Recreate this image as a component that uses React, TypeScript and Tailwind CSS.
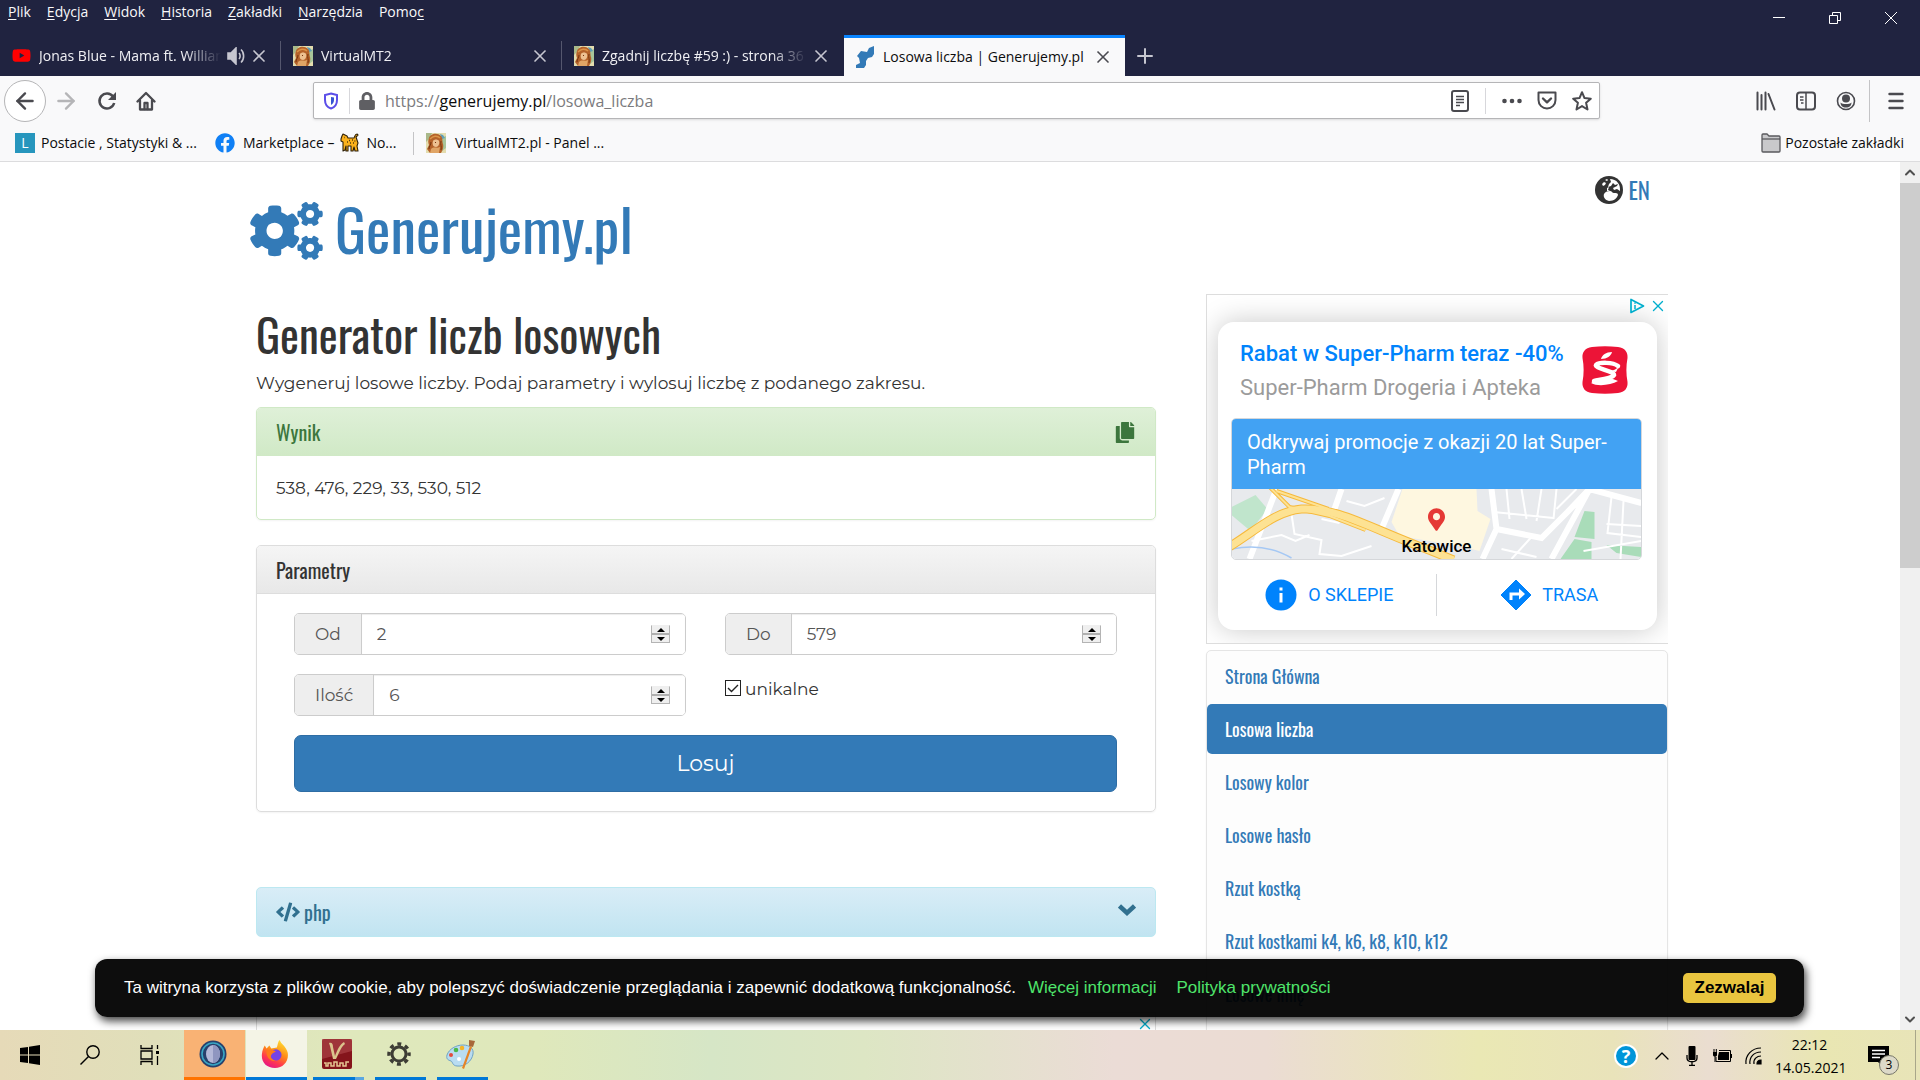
import React, { useState } from 'react';
import { FaCogs, FaCode, FaCopy, FaLock, FaFacebook, FaYoutube, FaMapMarkerAlt } from 'react-icons/fa';
import { ArrowLeft, ArrowRight, X, Plus, ChevronUp, ChevronDown } from 'lucide-react';

const MENU = ['Plik', 'Edycja', 'Widok', 'Historia', 'Zakładki', 'Narzędzia', 'Pomoc'];

const NAV_LINKS = [
  'Strona Główna',
  'Losowa liczba',
  'Losowy kolor',
  'Losowe hasło',
  'Rzut kostką',
  'Rzut kostkami k4, k6, k8, k10, k12',
  'Losowe imię',
];

const Portrait = () => (
  <svg viewBox="0 0 20 20" className="w-5 h-5 shrink-0">
    <rect width="20" height="20" fill="#e3dcae" />
    <path d="M0 0h6L3 6 0 9z" fill="#a9b98a" />
    <path d="M15 5l5-2v12l-4 3z" fill="#a8c59a" />
    <path d="M14 1l3 1 2 3-3 1z" fill="#5f9fb8" />
    <path d="M3 5c1-4 8-6 12-2 2 2 1 5 2 8 1 4-1 7-2 9H4l-3-4 2-4c-1-2-1-5 0-7z" fill="#b4622a" />
    <path d="M7 8c1-2 5-2 6 0 1 3-1 6-3 6-3 0-4-3-3-6z" fill="#edc090" />
    <path d="M5 16c3-3 6 0 9-2l-1 6H4z" fill="#e0a566" />
    <path d="M4 6c3-3 7-4 10-1" fill="none" stroke="#db9448" strokeWidth="1.500" />
    <path d="M5 9c0 3-2 4-2 7M15 8c-1 4 1 5 0 9M9 9.500h1" fill="none" stroke="#74350f" />
  </svg>
);

const ScriptMark = () => (
  <svg viewBox="0 0 18 22" className="w-[18px] h-[22px] shrink-0">
    <path d="M18 0v8l-2 3-4 1-2 3v4l-2 3H0v-3l4-2-1-5-2-2 4-5 6 1 2-4z" fill="#337ab7" />
  </svg>
);

interface TabProps {
  title: string;
  icon: React.ReactNode;
  active?: boolean;
  playing?: boolean;
}

const Tab: React.FC<TabProps> = ({ title, icon, active, playing }) => (
  <div
    className={
      active
        ? 'flex items-center w-[281px] h-[41px] ml-px px-3 bg-[#f9f9fa] border-t-[3px] border-[#0a84ff] text-[#0c0c0d]'
        : 'flex items-center w-[281px] h-[41px] px-3 text-[#f0f0f4]'
    }
  >
    {icon}
    <span
      className={
        active
          ? 'flex-1 ml-[9px] overflow-hidden whitespace-nowrap'
          : 'flex-1 ml-2 overflow-hidden whitespace-nowrap [mask-image:linear-gradient(to_left,transparent,black_36px)]'
      }
    >
      {title}
    </span>
    {playing && (
      <svg viewBox="0 0 18 18" className="w-[18px] h-[18px] ml-[6px] shrink-0" fill="none" stroke="#c6c6d0" strokeWidth="1.600">
        <path d="M1 6h3l5-5v16l-5-5H1z" fill="#c6c6d0" />
        <path d="M12 6c1.500 1.500 1.500 4.500 0 6M14 2.500c3.500 3 3.500 10 0 13" />
      </svg>
    )}
    <button aria-label="Zamknij kartę" className="ml-1">
      <X className={active ? 'w-[20px] h-5 text-[#4a4a50]' : 'w-[20px] h-5 text-[#c6c6d0]'} />
    </button>
  </div>
);

const TabLine = () => <div className="w-px h-[29px] -ml-px bg-[#55576e]" />;

const BrowserTop = () => (
  <header className="bg-[#202340] text-sm shrink-0">
    <div className="flex justify-between h-[35px]">
      <nav className="flex gap-4 pl-2 h-6 items-center text-[#f9f9fa]">
        {MENU.map((item) =>
          item === 'Pomoc' ? (
            <button key={item}>Pomo<u className="underline-offset-2">c</u></button>
          ) : (
            <button key={item}><u className="underline-offset-2">{item[0]}</u>{item.slice(1)}</button>
          )
        )}
      </nav>
      <div className="flex items-center gap-[42px] pr-[22px] text-white">
        <button aria-label="Minimalizuj"><svg viewBox="0 0 14 14" className="w-[14px] h-[14px]"><path d="M1 6.500h12" stroke="currentColor" /></svg></button>
        <button aria-label="Przywróć"><svg viewBox="0 0 14 14" className="w-[14px] h-[14px]" fill="none" stroke="currentColor"><path d="M1.500 4.500h8v8h-8zM4.500 4V1.500h8v8H10" /></svg></button>
        <button aria-label="Zamknij"><svg viewBox="0 0 14 14" className="w-[14px] h-[14px]" stroke="currentColor"><path d="M1 1l12 12M13 1L1 13" /></svg></button>
      </div>
    </div>
    <div className="flex items-center">
      <Tab
        title="Jonas Blue - Mama ft. William Singe"
        playing
        icon={<span className="grid place-items-center w-[19px] h-5 shrink-0"><FaYoutube className="w-[19px] h-[19px] text-[#ff0000]" /></span>}
      />
      <TabLine />
      <Tab title="VirtualMT2" icon={<Portrait />} />
      <TabLine />
      <Tab title="Zgadnij liczbę #59 :) - strona 36 - Forum" icon={<Portrait />} />
      <Tab title="Losowa liczba | Generujemy.pl" icon={<ScriptMark />} active />
      <button aria-label="Nowa karta" className="ml-2"><Plus className="w-6 h-6 text-[#c6c6d0]" /></button>
    </div>
  </header>
);

const Toolbar = () => (
  <div className="flex items-center h-[49px] pl-1 pr-4 text-[#4a4a4f]">
    <button aria-label="Wstecz" className="grid place-items-center w-[42px] h-[42px] rounded-full border border-[#b5b5b7] bg-white">
      <ArrowLeft className="w-[26px] h-[26px]" strokeWidth={2.200} />
    </button>
    <button aria-label="Dalej" className="ml-[7px] text-[#b5b5b7]"><ArrowRight className="w-[26px] h-[26px]" strokeWidth={2.200} /></button>
    <button aria-label="Odśwież" className="ml-[18px]">
      <svg viewBox="0 0 20 20" className="w-5 h-5" fill="none" stroke="currentColor" strokeWidth="2.500">
        <path d="M16 5.500A7.500 7.500 0 1 0 17.200 12" />
        <path d="M19 1v8h-8z" fill="currentColor" stroke="none" />
      </svg>
    </button>
    <button aria-label="Strona startowa" className="ml-[19px]">
      <svg viewBox="0 0 20 20" className="w-5 h-5" fill="none" stroke="currentColor" strokeWidth="2.300" strokeLinejoin="round" strokeLinecap="round">
        <path d="M1.500 10.500L10 2l8.500 8.500M4 9.500V18.500h12V9.500" />
        <path d="M8.500 18v-6h3v6" />
      </svg>
    </button>

    <div className="flex items-center flex-1 h-[37px] ml-[157px] mr-[156px] pl-[9px] pr-[7px] bg-white border border-[#b5b5b7] rounded-xs shadow-sm">
      <svg viewBox="0 0 16 18" className="w-4 h-[18px] shrink-0" fill="none" stroke="#5b4ee8" strokeWidth="2">
        <path d="M8 1.500l6 1.500v5c0 5-3 7.500-6 8.500C5 15.500 2 13 2 8V3z" />
        <path d="M8 5v8c1.800-1 3-3 3-5V5.500z" fill="#3554d1" stroke="none" />
      </svg>
      <div className="w-px h-[26px] ml-[10px] mr-[9px] bg-[#d7d7db]" />
      <FaLock className="w-4 h-[18px] text-[#5f5f63]" />
      <div className="flex-1 ml-[10px] pt-px text-base text-[#7b7b7e] whitespace-nowrap">
        https://<span className="text-[#0c0c0d]">generujemy.pl</span>/losowa_liczba
      </div>
      <button aria-label="Tryb czytania">
        <svg viewBox="0 0 18 22" className="w-[18px] h-[22px]" fill="none" stroke="currentColor" strokeWidth="2">
          <rect x="1" y="1" width="16" height="20" rx="2" />
          <path d="M5 6.500h8M5 9.500h8M5 12.500h8M5 15.500h4" strokeWidth="1.500" />
        </svg>
      </button>
      <div className="w-px h-[26px] mx-4 bg-[#d7d7db]" />
      <button aria-label="Działania">
        <svg viewBox="0 0 20 20" className="w-5 h-5" fill="currentColor"><circle cx="2.500" cy="10" r="2.300" /><circle cx="10" cy="10" r="2.300" /><circle cx="17.500" cy="10" r="2.300" /></svg>
      </button>
      <button aria-label="Pocket" className="ml-[15px]">
        <svg viewBox="0 0 20 20" className="w-5 h-5" fill="none" stroke="currentColor" strokeWidth="2" strokeLinecap="round" strokeLinejoin="round">
          <path d="M1.500 1.500h17V9c0 5-4 8.500-8.500 8.500S1.500 14 1.500 9z" /><path d="M6 7.500l4 3.800 4-3.800" strokeWidth="2.400" />
        </svg>
      </button>
      <button aria-label="Dodaj zakładkę" className="ml-[15px]">
        <svg viewBox="0 0 20 20" className="w-5 h-5" fill="none" stroke="currentColor" strokeWidth="2" strokeLinejoin="round">
          <path d="M10 1.200l2.500 5.900 6.300.600-4.700 4.100 1.400 6.700-5.500-3.400-5.500 3.400 1.400-6.700L1.200 7.700l6.300-.6z" />
        </svg>
      </button>
    </div>

    <div className="flex items-center gap-5">
      <button aria-label="Biblioteka">
        <svg viewBox="0 0 20 20" className="w-5 h-5" stroke="currentColor" strokeWidth="2" strokeLinecap="round"><path d="M1.500 1.500v17M5.500 4v14.500M9.500 1.500v17M12.500 3l6 15.500" /></svg>
      </button>
      <button aria-label="Panel boczny">
        <svg viewBox="0 0 20 20" className="w-5 h-5" fill="none" stroke="currentColor" strokeWidth="2"><rect x="1" y="1.500" width="18" height="17" rx="3" /><path d="M10 2v16M4 6h3.500M4 9h3.500M5 12h2.500" strokeWidth="1.500" /></svg>
      </button>
      <button aria-label="Konto">
        <svg viewBox="0 0 20 20" className="w-5 h-5" fill="currentColor"><circle cx="10" cy="10" r="8.500" fill="none" stroke="currentColor" strokeWidth="1.600" /><circle cx="10" cy="7.500" r="4" /><path d="M4.500 11.500c2 2 9 2 11 0 0 3-2 5-5.500 5s-5.500-2-5.500-5z" /></svg>
      </button>
    </div>
    <div className="w-px h-[42px] ml-[13px] mr-[18px] bg-[#c4c4c6]" />
    <button aria-label="Menu">
      <svg viewBox="0 0 16 18" className="w-4 h-[18px]" stroke="currentColor" strokeWidth="2.400" strokeLinecap="round"><path d="M1.500 2h13M1.500 9h13M1.500 16h13" /></svg>
    </button>
  </div>
);

const Bookmarks = () => (
  <div className="flex items-center h-[37px] pl-[15px] pr-4 text-sm text-[#0c0c0d] border-b border-[#dcdcde] whitespace-nowrap">
    <a href="#postacie" className="flex items-center gap-[6px] w-[200px]">
      <span className="grid place-items-center w-5 h-5 bg-[#2796bd] text-white text-sm">L</span>Postacie , Statystyki &amp; ...
    </a>
    <a href="#marketplace" className="flex items-center w-[198px]">
      <FaFacebook className="w-5 h-5 text-[#1080f5] mr-2" />Marketplace –
      <svg viewBox="0 0 20 20" className="w-5 h-5 mx-[6px] shrink-0" fill="#fbb11b" stroke="#2e2008" strokeWidth="1.100" strokeLinejoin="round">
        <path d="M1 6l1-3 1-2 2 1 2 1 1 2h6c1-2 1-4 3-4l1 1-2 2 1 3 1 3-1 3 1 5h-3l-1-4-1 4h-2v-5H8v5H6v-5l-1 4-2 1v-7L3 9 1 8z" />
        <path d="M9 7.500h.8M12 7h.8M14.500 8h.8M10 10h.8M13 10h.8M4 4.500h.5M7 9h.8" strokeWidth="1.300" />
      </svg>
      No...
    </a>
    <div className="w-px h-[23px] mr-3 bg-[#c4c4c6]" />
    <a href="#panel" className="flex items-center gap-[9px]"><Portrait />VirtualMT2.pl - Panel ...</a>
    <button className="flex items-center gap-1 ml-auto">
      <svg viewBox="0 0 20 20" className="w-5 h-5" fill="#c9c9cb" stroke="#5a5a5e" strokeWidth="1.300"><path d="M1 2c0-.6.400-1 1-1h4l2 2h10c.6 0 1 .400 1 1v14c0 .6-.4 1-1 1H2c-.6 0-1-.4-1-1z" /><path d="M1 6h18" /></svg>
      Pozostałe zakładki
    </button>
  </div>
);

interface NumberFieldProps {
  id: string;
  label: string;
  value: number;
  onChange: (v: number) => void;
}

const NumberField: React.FC<NumberFieldProps> = ({ id, label, value, onChange }) => (
  <div className="flex h-[42px] rounded-[5px] border border-[#ccc] overflow-hidden text-[#555] text-[17px]">
    <label htmlFor={id} className="flex items-center px-5 pt-px bg-[#eee] border-r border-[#ccc]">{label}</label>
    <div className="flex flex-1 items-center pl-[15px] pr-[15px] bg-white shadow-[inset_0_1px_1px_rgba(0,0,0,0.075)]">
      <input
        id={id}
        type="number"
        value={value}
        onChange={(e) => onChange(Number(e.target.value))}
        className="flex-1 min-w-0 pt-px outline-none [appearance:textfield] [&::-webkit-inner-spin-button]:appearance-none"
      />
      <div className="flex flex-col w-[19px] h-[18px] border border-t-[#efefef] border-[#b4b4b4] bg-[#efefef]">
        <button aria-label={`${label} więcej`} onClick={() => onChange(value + 1)} className="grid place-items-center flex-1 border-b-2 border-[#b0b0b0]">
          <svg viewBox="0 0 8 4" className="w-2 h-1"><path d="M0 4l4-4 4 4z" /></svg>
        </button>
        <button aria-label={`${label} mniej`} onClick={() => onChange(value - 1)} className="grid place-items-center flex-1">
          <svg viewBox="0 0 8 4" className="w-2 h-1"><path d="M0 0l4 4 4-4z" /></svg>
        </button>
      </div>
    </div>
  </div>
);

const Generator = () => {
  const [from, setFrom] = useState(2);
  const [to, setTo] = useState(579);
  const [count, setCount] = useState(6);
  const [unique, setUnique] = useState(true);

  return (
    <section className="text-[#333]">
      <h1 className="h-[77px] pt-2 text-[45px] leading-[64px] font-['Oswald','Liberation_Sans_Narrow',sans-serif]">Generator liczb losowych</h1>
      <p className="h-9 text-[17px] leading-6">Wygeneruj losowe liczby. Podaj parametry i wylosuj liczbę z podanego zakresu.</p>

      {/* Result */}
      <div className="rounded-[5px] border border-[#d0e9c6] shadow-xs overflow-hidden">
        <div className="flex items-center justify-between h-12 pl-[19px] pr-5 bg-linear-to-b from-[#dff0d8] to-[#d0e9c6] text-[#3c763d]">
          <h2 className="text-xl font-['Oswald','Liberation_Sans_Narrow',sans-serif]">Wynik</h2>
          <button aria-label="Kopiuj"><FaCopy className="w-5 h-[21px]" /></button>
        </div>
        <div className="h-[63px] px-[19px] pt-5 text-[17px] leading-6">538, 476, 229, 33, 530, 512</div>
      </div>

      {/* Parameters */}
      <div className="mt-[25px] rounded-[5px] border border-[#ddd] shadow-xs overflow-hidden">
        <div className="flex items-center h-12 px-[19px] bg-linear-to-b from-[#f5f5f5] to-[#e8e8e8] border-b border-[#ddd]">
          <h2 className="text-xl font-['Oswald','Liberation_Sans_Narrow',sans-serif]">Parametry</h2>
        </div>
        <form onSubmit={(e) => e.preventDefault()} className="pl-[37px] pr-[38px] pt-[19px] pb-[19px]">
          <div className="grid grid-cols-2 gap-x-[39px] gap-y-[19px]">
            <NumberField id="from" label="Od" value={from} onChange={setFrom} />
            <NumberField id="to" label="Do" value={to} onChange={setTo} />
            <NumberField id="count" label="Ilość" value={count} onChange={setCount} />
            <label className="flex items-center gap-1 h-8 text-[17px]">
              <span className="grid pb-1">
                <input
                  type="checkbox"
                  checked={unique}
                  onChange={(e) => setUnique(e.target.checked)}
                  className="peer appearance-none col-start-1 row-start-1 w-4 h-4 border border-[#222]"
                />
                <svg viewBox="0 0 16 16" className="col-start-1 row-start-1 w-4 h-4 pointer-events-none invisible peer-checked:visible" fill="none" stroke="#222" strokeWidth="1.400"><path d="M3 8l3.500 3.500L13 5" /></svg>
              </span>
              unikalne
            </label>
          </div>
          <button className="w-full h-[57px] mt-[19px] rounded-[7px] border border-[#2e6da4] bg-[#337ab7] text-[22px] text-white">Losuj</button>
        </form>
      </div>

      <button className="flex items-center w-full h-[50px] mt-[75px] px-[19px] rounded-[5px] border border-[#bce8f1] bg-linear-to-b from-[#d9edf7] to-[#c1e4f1] text-[#31708f]">
        <FaCode className="w-6 h-6" />
        <span className="ml-1 text-xl font-['Oswald','Liberation_Sans_Narrow',sans-serif]">php</span>
        <svg viewBox="0 0 18 18" className="w-[18px] h-[18px] ml-auto mb-1" fill="none" stroke="currentColor" strokeWidth="4.500"><path d="M1.500 5L9 12l7.500-7" /></svg>
      </button>
      <div className="h-[200px] mt-[75px] border border-[#ddd]">
        <X className="w-[18px] h-[18px] ml-auto mt-[2px] mr-px text-[#00aecd]" strokeWidth={1.800} />
      </div>
    </section>
  );
};

const CityMap = () => (
  <svg viewBox="0 0 410 70" preserveAspectRatio="xMidYMid slice" className="block w-full h-[70px]">
    <rect width="410" height="70" fill="#e8eaed" />
    <path d="M0 18L24 6l12 14-17 22L0 26z" fill="#c0e5cc" />
    <path d="M353 22l10 1 0 27-20-2zM343 50l17 3 0 17h-31zM375 56l35 2v10l-25-4z" fill="#a9dcb9" />
    <path d="M171 0h74l1 22 13 8-11 32-20-5-60-10-8-14z" fill="#fef7e0" />
    <g fill="none" stroke="#fff" strokeWidth="6">
      <path d="M45 0L18 70M167 0l-17 40M110 0l-7 20M260 0l5 40-14 30M265 40l45 9 26-26 22-23M358 0l52 14M358 0l-38 70" />
    </g>
    <g fill="none" stroke="#fff" strokeWidth="2">
      <path d="M20 52l30-6 14 6 14-6M60 25l3 20 27 6-2 14 22 2 30-10M90 30l18 4M115 12l18 5 20-8M275 0l3 30M290 0l5 30M262 23l60 6M310 0l-5 32M325 0l-3 30M345 0l-20 20M380 8l-4 36 34 4M392 12l-3 58M375 35l35 2M352 62l58-10M300 48l-20 22M270 60l35 8" />
    </g>
    <path d="M0 60c25-5 45 0 60 9" fill="none" stroke="#a5c8f4" strokeWidth="1.500" />
    <g fill="none" stroke="#f6b93b" strokeWidth="9">
      <path d="M-4 59C24 42 44 22 70 20c36-2 70 20 130 42l22 9" />
      <path d="M38-2l20 20 40 9 36 14M45 2l52 18" strokeWidth="4" />
    </g>
    <g fill="none" stroke="#fde293" strokeWidth="7">
      <path d="M-4 59C24 42 44 22 70 20c36-2 70 20 130 42l22 9" />
      <path d="M38-2l20 20 40 9 36 14M45 2l52 18" strokeWidth="2" />
    </g>
  </svg>
);

const Advert = () => (
  <aside className="h-[350px] px-[11px] pt-[27px] border border-r-0 border-[#ddd] relative overflow-hidden font-['Roboto',sans-serif]">
    <div className="absolute top-[2px] right-px flex items-center gap-1 text-[#00aecd]">
      <svg viewBox="0 0 16 16" className="w-4 h-4" fill="none" stroke="currentColor" strokeWidth="1.700" strokeLinejoin="round"><path d="M2 1.500v13L14.500 8z" /><path d="M6 7v4M6 4.500v1.300" strokeWidth="1.500" /></svg>
      <X className="w-[18px] h-[18px]" strokeWidth={1.800} />
    </div>
    <div className="h-[308px] pl-[13px] pr-[15px] pt-[15px] rounded-2xl bg-white shadow-[0_0_28px_rgba(0,0,0,0.22)]">
      <div className="flex justify-between px-[9px] h-[81px]">
        <div>
          <a href="#rabat" className="block text-[22px] leading-[34px] font-medium text-[#0083fc]">Rabat w Super-Pharm teraz -40%</a>
          <div className="text-[22px] leading-[34px] text-[#9b9b9b]">Super-Pharm Drogeria i Apteka</div>
        </div>
        <svg viewBox="0 0 46 48" className="w-[46px] h-12 mt-[9px] mr-[5px] shrink-0">
          <path d="M10 1c9-1 17-1 26 0 7 1 10 5 9.500 11-1.500 8-1.500 16 0 24 .5 6-2.500 10-9.500 11-9 1-17 1-26 0-7-1-10-5-9.500-11 1.500-8 1.500-16 0-24C0 6 3 2 10 1z" fill="#ec1437" />
          <path d="M19 13c1-4 5-7 11-7-1 4-5 7-11 7z" fill="#fff" />
          <path d="M36 20c-5-4-19-4-22-1-2 3 18 6 18 10-2 3-10 4-20 6" fill="none" stroke="#fff" strokeWidth="4.500" strokeLinecap="round" />
          <path d="M26 25c5 0 9-2 11-5l-3 6z" fill="#fff" />
          <path d="M9 37c7-5 20-6 27-2-7 4-20 6-27 2z" fill="#fff" />
        </svg>
      </div>
      <div className="relative rounded-[5px] border border-[#d5d7da] overflow-hidden">
        <div className="h-[70px] px-[15px] pt-[11px] bg-[#42a2f3] text-xl leading-[25px] text-white">Odkrywaj promocje z okazji 20 lat Super-Pharm</div>
        <CityMap />
        <div className="absolute inset-x-0 bottom-px flex flex-col items-center text-black">
          <FaMapMarkerAlt className="w-[17px] h-[23px] text-[#e53935]" />
          <span className="mt-[3px] text-[17px] leading-6 font-medium">Katowice</span>
        </div>
      </div>
      <div className="grid grid-cols-2 h-[42px] mt-[14px] text-lg text-[#0083fc]">
        <a href="#sklep" className="flex items-center justify-center gap-[11px] pr-2 border-r border-[#d5d7da]">
          <svg viewBox="0 0 32 32" className="w-8 h-8"><circle cx="16" cy="16" r="15.500" fill="currentColor" /><path d="M14.500 8.500h3v3h-3zM14.500 14h3v9.500h-3z" fill="#fff" /></svg>
          O SKLEPIE
        </a>
        <a href="#trasa" className="flex items-center justify-center gap-[10px] pl-5">
          <svg viewBox="0 0 32 32" className="w-8 h-8"><path d="M16 1l15 15-15 15L1 16z" fill="currentColor" stroke="currentColor" strokeLinejoin="round" /><path d="M11 21v-6h9" fill="none" stroke="#fff" strokeWidth="3" /><path d="M19 9.500l6 5.500-6 5.500z" fill="#fff" /></svg>
          TRASA
        </a>
      </div>
    </div>
  </aside>
);

const Website = () => (
  <div className="flex flex-1 min-h-0 bg-white">
    <div className="flex-1 min-w-0 relative overflow-hidden font-['Montserrat','Inter',sans-serif]">
      <div className="max-w-[1436px] mx-auto pl-[18px]">
        <div className="flex justify-between h-[132px] font-['Oswald','Liberation_Sans_Narrow',sans-serif] text-[#337ab7]">
          <a href="#home" className="flex items-center gap-3 text-[58px]"><FaCogs className="w-[73px] h-[58px] mt-[6px]" />Generujemy.pl</a>
          <a href="#en" className="flex items-center gap-[5px] h-14 pr-[18px] text-[23px]">
            <svg viewBox="0 0 28 28" className="w-7 h-7">
              <circle cx="14" cy="14" r="14" fill="#333" />
              <path d="M10 4l2-1 1 1-1 1zM7 8l2-2 2 1-1 2-2 1zM15 3c3 0 6 1 8 4 2 2 2 5 2 8l-3-2-3 1-1-2 4-2 1-2-3 1-2-2-2 3-3 1 1-3 2-2zM12 12l2-1-1 3 2 1-3 0z" fill="#fff" />
              <path d="M9 18c1-2 3-3 6-3 2 0 2 2 4 2 2 0 4 0 4 2-1 3-4 6-9 6-4-1-6-4-5-7z" fill="#fff" />
            </svg>
            EN
          </a>
        </div>
        <div className="grid grid-cols-[minmax(0,1fr)_462px] gap-[50px] pl-[6px]">
          <Generator />
          <div>
            <Advert />
            <nav className="flex flex-col gap-[3px] h-[500px] mt-[6px] rounded-[5px] border border-[#e5e5e5] shadow-xs bg-[#fdfdfd] text-lg text-[#337ab7] font-['Oswald','Liberation_Sans_Narrow',sans-serif]">
              {NAV_LINKS.map((link, i) => (
                <a
                  key={link}
                  href="#generator"
                  className={
                    i === 1
                      ? 'flex items-center h-[50px] px-[18px] shrink-0 rounded-[5px] bg-[#337ab7] text-white'
                      : 'flex items-center h-[50px] px-[18px] shrink-0'
                  }
                >
                  {link}
                </a>
              ))}
            </nav>
          </div>
        </div>
      </div>

      {/* Cookie notice */}
      <div className="absolute bottom-[13px] left-[5%] right-[96px] flex items-center h-[58px] pl-[29px] pr-7 rounded-xl bg-black/95 text-[17px] text-white shadow-[2px_4px_8px_rgba(0,0,0,0.75)] font-['Liberation_Sans',sans-serif]">
        <span>Ta witryna korzysta z plików cookie, aby polepszyć doświadczenie przeglądania i zapewnić dodatkową funkcjonalność.</span>
        <a href="#info" className="ml-3 text-[#4fe56b]">Więcej informacji</a>
        <a href="#privacy" className="ml-5 text-[#4fe56b]">Polityka prywatności</a>
        <button className="ml-auto h-[30px] w-[93px] rounded-[5px] bg-[#e9c53f] text-black font-bold">Zezwalaj</button>
      </div>
    </div>

    <div className="flex flex-col items-center w-5 bg-[#f0f0f0] text-[#505050]">
      <ChevronUp className="w-4 h-[21px]" strokeWidth={3} />
      <div className="w-full h-[385px] bg-[#cdcdcd]" />
      <ChevronDown className="w-4 h-[21px] mt-auto" strokeWidth={3} />
    </div>
  </div>
);

const Taskbar = () => (
  <footer className="flex h-[50px] shrink-0 bg-[linear-gradient(90deg,#e6dab8,#e0dfba_8%,#dfe8bc_18%,#dfe8bb_28%,#d6e6c6_37%,#dde6c4_45%,#ebdcd6_58%,#ebdcd3_66%,#eae8b4_77%,#e9e3ba_84%,#eaddd0_89%,#e9e6b2_95%,#e8e4b8)]">
    <button aria-label="Start" className="grid place-items-center w-[60px]"><svg viewBox="0 0 20 20" className="w-5 h-5"><path d="M0 3l8-1v7.500H0zM9 1.800L20 0v9.500H9zM0 10.500h8V18l-8-1zM9 10.500h11V20L9 18.200z" /></svg></button>
    <button aria-label="Szukaj" className="grid place-items-center w-[60px]"><svg viewBox="0 0 20 20" className="w-5 h-5" fill="none" stroke="#000" strokeWidth="1.400"><circle cx="13" cy="7" r="6.200" /><path d="M8.500 11.500L.5 19.500" /></svg></button>
    <button aria-label="Widok zadań" className="grid place-items-center w-[64px] pr-1"><svg viewBox="0 0 20 20" className="w-5 h-5" fill="none" stroke="#000" strokeWidth="1.300"><path d="M1 0v3.500h11V0M1 20v-3.500h11V20M1 6h11v8H1zM17.500 0v4M17.500 11v9" /><path d="M16 6h3v3h-3z" fill="#000" stroke="none" /></svg></button>
    <button aria-label="Aplikacja" className="grid place-items-center w-[61px] pr-1 bg-[#f9b274] border-b-[3px] border-[#ff7300]">
      <svg viewBox="0 0 28 28" className="w-7 h-7"><circle cx="14" cy="14" r="13.500" fill="#27406c" /><circle cx="14" cy="14" r="11" fill="none" stroke="#38a6c4" strokeWidth="1.600" /><ellipse cx="14" cy="14" rx="7" ry="9" fill="#b4b8d8" /><path d="M14 5c4 0 7 4 7 9s-3 9-7 9z" fill="#8f96c0" /></svg>
    </button>
    <button aria-label="Firefox" className="grid place-items-center w-[61px] pr-1 ml-px bg-[#f4f4e6] border-b-[3px] border-[#0078d7]">
      <svg viewBox="0 0 30 32" className="w-7 h-[30px]">
        <defs><linearGradient id="fox" x1="0.800" y1="0" x2="0.300" y2="1"><stop offset="0" stopColor="#ffe534" /><stop offset="0.450" stopColor="#ff8a16" /><stop offset="0.750" stopColor="#ff3750" /><stop offset="1" stopColor="#e31587" /></linearGradient></defs>
        <path d="M20 1c1 4 7 7 8.500 13C30.500 23 24 31 15 31S0 25 1 16c.3-4 2-7 3-9l2 3 3-3 2 3 6-1c1-3 1-6 3-8z" fill="url(#fox)" />
        <circle cx="16" cy="17" r="6" fill="#7542e5" /><path d="M6 12c4-2 7 0 10 1-2 2-4 2-5 4-2 3 2 6 5 6-6 2-11-4-10-11z" fill="#ff7a1a" />
      </svg>
    </button>
    <div className="flex gap-[11px] ml-[6px]">
      <div className="flex">
        <button aria-label="VirtualMT2" className="grid place-items-center w-[42px] pl-[6px] border-b-[3px] border-[#0078d7]">
          <svg viewBox="0 0 30 30" className="w-[30px] h-[30px]"><rect width="30" height="30" rx="2" fill="#84141b" /><path d="M0 0h30v12L0 20z" fill="#b04a4e" opacity=".6" /><path d="M7 4c3-1 4 1 4 4l2 9c2-5 4-11 9-14l1 2c-5 4-6 10-9 15h-3L8 7z" fill="#dbc48c" /><path d="M2 24h2v3h2v-3h3v3h3v-4h3v4h3v-3h3v3h3v-4h3" fill="none" stroke="#e5c592" strokeWidth="1.500" /></svg>
        </button>
        <div className="w-[9px] border-b-[3px] border-[#5aa7e2]" />
      </div>
      <button aria-label="Ustawienia" className="grid place-items-center w-[51px] pr-1 border-b-[3px] border-[#0078d7]">
        <svg viewBox="0 0 24 24" className="w-6 h-6" fill="none" stroke="#3d3d35"><circle cx="12" cy="12" r="7" strokeWidth="3" /><circle cx="12" cy="12" r="10" strokeWidth="3.500" strokeDasharray="3.930 3.920" strokeDashoffset="1.960" /></svg>
      </button>
      <button aria-label="Paint" className="grid place-items-center w-[51px] pr-1 border-b-[3px] border-[#0078d7]">
        <svg viewBox="0 0 30 30" className="w-[30px] h-[30px]"><path d="M17 6c7 0 11 4 10 9-1 7-8 13-16 12-5-.5-4-4-6-5-3-1-5-2-4-6C3 10 10 6 17 6z" fill="#b9dcf1" stroke="#6fa2c4" /><circle cx="5" cy="16" r="2" fill="#e34b3d" /><circle cx="10" cy="11" r="2.300" fill="#4cb848" /><circle cx="16" cy="9" r="2.300" fill="#f6b425" /><circle cx="13" cy="20" r="2" fill="#fff" /><path d="M24 7l2 1-8 22-2-1z" fill="#e58427" /><path d="M23 1l6 1-2 6-4-1z" fill="#a8683a" /></svg>
      </button>
    </div>

    <div className="flex items-center ml-auto pt-px text-sm text-black font-['Open_Sans',sans-serif]">
      <button aria-label="Pomoc" className="grid place-items-center w-6 h-6 rounded-full bg-[#0095d9] border-2 border-white text-white text-lg leading-5 font-bold">?</button>
      <ChevronUp className="w-6 h-6 ml-3" strokeWidth={1.300} />
      <svg viewBox="0 0 12 20" className="w-3 h-5 ml-3"><rect x="2.500" width="7" height="14" rx="1" /><path d="M1 9v3c0 5 10 5 10 0V9M6 16v3M3 19.300h6" fill="none" stroke="#000" strokeWidth="1.300" /></svg>
      <svg viewBox="0 0 20 14" className="w-5 h-[14px] ml-[14px]"><path d="M7 1.500h11.500v11H4V8" fill="none" stroke="#000" /><path d="M19 5h1v4h-1zM7 3h10v8H6V7zM1 3h4v3c0 2-4 2-4 0zM1.500 0h1v3h-1zM3.800 0h1v3h-1zM2.500 7h1v6h-1z" /></svg>
      <svg viewBox="0 0 18 18" className="w-[18px] h-[18px] ml-3" fill="none" stroke="#000" strokeWidth="1.200"><path d="M2 17C1 8 8 1 17 1M6 17C5 10 10 5 17 5M10 17c-1-5 3-8 7-8" /><path d="M13 17c0-2 1-4 4-4v4z" fill="#000" /></svg>
      <div className="w-[69px] ml-[13px] text-center leading-[23px]">22:12<br />14.05.2021</div>
      <button aria-label="Powiadomienia" className="relative w-[22px] h-[20px] ml-6 mr-[25px]">
        <svg viewBox="0 0 22 20" className="w-[22px] h-5"><path d="M0 0h21v16h-7v4l-4-4H0z" /><path d="M4 4.500h13M4 8h13M4 11.500h8" stroke="#fff" strokeWidth="1.300" /></svg>
        <span className="absolute top-[9px] left-[11px] grid place-items-center w-5 h-5 rounded-full bg-[#dcd9c8] border border-[#77776a] text-xs">3</span>
      </button>
    </div>
    <div className="w-[5px] border-l border-[#a9a68a]" />
  </footer>
);

export default function App() {
  return (
    <div className="flex flex-col h-screen overflow-hidden bg-[#f9f9fa] font-['Open_Sans',sans-serif]">
      <BrowserTop />
      <Toolbar />
      <Bookmarks />
      <Website />
      <Taskbar />
    </div>
  );
}
